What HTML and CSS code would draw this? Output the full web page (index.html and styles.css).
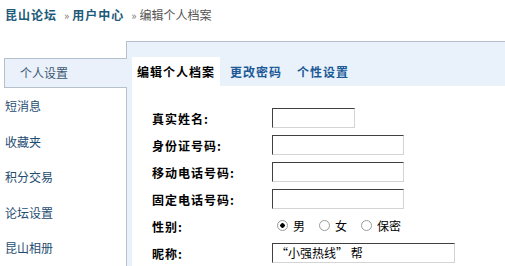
FILE: index.html
```html
<!DOCTYPE html>
<html lang="zh-CN">
<head>
<meta charset="utf-8">
<title>编辑个人档案</title>
<link rel="stylesheet" href="styles.css">
</head>
<body>
<div class="crumb"><a class="crumb-link">昆山论坛</a><span class="sep">»</span><a class="crumb-link">用户中心</a><span class="sep">»</span><span class="crumb-cur">编辑个人档案</span></div>
<div class="layout">
  <aside class="side">
    <div class="side-active">个人设置</div>
    <ul class="side-list">
      <li>短消息</li>
      <li>收藏夹</li>
      <li>积分交易</li>
      <li>论坛设置</li>
      <li>昆山相册</li>
    </ul>
  </aside>
  <main class="panel">
    <nav class="tabs">
      <span class="tab tab-on">编辑个人档案</span>
      <span class="tab">更改密码</span>
      <span class="tab">个性设置</span>
    </nav>
    <div class="content">
      <form class="form">
        <label class="lbl">真实姓名:</label>
        <div class="fld"><input class="inp inp-s" type="text"></div>
        <label class="lbl">身份证号码:</label>
        <div class="fld"><input class="inp inp-m" type="text"></div>
        <label class="lbl">移动电话号码:</label>
        <div class="fld"><input class="inp inp-m" type="text"></div>
        <label class="lbl">固定电话号码:</label>
        <div class="fld"><input class="inp inp-m" type="text"></div>
        <label class="lbl">性别:</label>
        <div class="fld radios">
          <input class="rb" type="radio" name="sex" checked><span class="rt">男</span>
          <input class="rb" type="radio" name="sex"><span class="rt">女</span>
          <input class="rb" type="radio" name="sex"><span class="rt">保密</span>
        </div>
        <label class="lbl">昵称:</label>
        <div class="fld"><input class="inp inp-l" type="text" value="“小强热线” 帮"></div>
      </form>
    </div>
  </main>
</div>
</body>
</html>
```

FILE: styles.css
```css
* { box-sizing: border-box; }
html, body { margin: 0; padding: 0; background: #fff; }
body {
  font-family: "Noto Sans CJK SC", "Noto Sans", sans-serif;
  font-size: 12px;
  color: #000;
  overflow: hidden;
}
.crumb {
  height: 41px;
  line-height: 30px;
  padding-left: 5px;
  white-space: nowrap;
}
.crumb-link {
  color: #1d5a7a;
  font-weight: bold;
  letter-spacing: 1px;
}
.sep {
  color: #777;
  font-size: 11px;
  margin: 0 3px 0 7px;
}
.crumb-cur { color: #555; }

.layout {
  display: flex;
  height: 225px;
}
.side {
  width: 127px;
  flex: none;
  border-right: 1px solid #b4c0cc;
  padding-top: 17px;
}
.side-active {
  margin: 0 -1px 0 4px;
  height: 30px;
  line-height: 28px;
  border: 1px solid #b4c0cc;
  border-right: none;
  background: #eaf1fb;
  padding-left: 15px;
  color: #3b5873;
}
.side-list {
  list-style: none;
  margin: 0;
  padding: 0;
}
.side-list li {
  height: 35.5px;
  line-height: 35.5px;
  padding-left: 5px;
  color: #1f4d72;
}
.panel {
  flex: 1;
  border-top: 1px solid #b4c0cc;
  background: #e9f1fb;
  padding-left: 5px;
  display: flex;
  flex-direction: column;
}
.tabs {
  height: 48px;
  display: flex;
  align-items: flex-end;
  gap: 5px;
}
.tab {
  height: 29px;
  line-height: 29px;
  padding: 0 5px;
  font-weight: bold;
  letter-spacing: 1px;
  color: #1b5a96;
}
.tab-on {
  background: #fff;
  color: #000;
}
.content {
  flex: 1;
  background: #fff;
  padding: 18px 0 0 20px;
}
.form {
  display: grid;
  grid-template-columns: 120px auto;
  grid-auto-rows: 27px;
  align-items: center;
}
.lbl {
  font-weight: bold;
  letter-spacing: 1px;
  color: #000;
  padding-top: 1px;
}
.fld {
  display: flex;
  align-items: center;
}
.inp {
  height: 20px;
  margin: 0;
  padding: 0 3px;
  border: 1px solid;
  border-color: #404040 #d4d4d4 #d4d4d4 #404040;
  font: inherit;
  color: #000;
  background: #fff;
  outline: none;
}
.inp-s { width: 83px; }
.inp-m { width: 132px; }
.inp-l { width: 183px; }
.radios { padding-left: 5px; }
.rb {
  appearance: none;
  -webkit-appearance: none;
  width: 11px;
  height: 11px;
  margin: 0;
  border: 1px solid #9a9a9a;
  border-radius: 50%;
  background: #fff;
}
.rb:checked {
  background: radial-gradient(circle, #000 0 2px, #fff 2.5px);
}
.rt {
  margin: 0 14px 0 5px;
  color: #000;
}
```
